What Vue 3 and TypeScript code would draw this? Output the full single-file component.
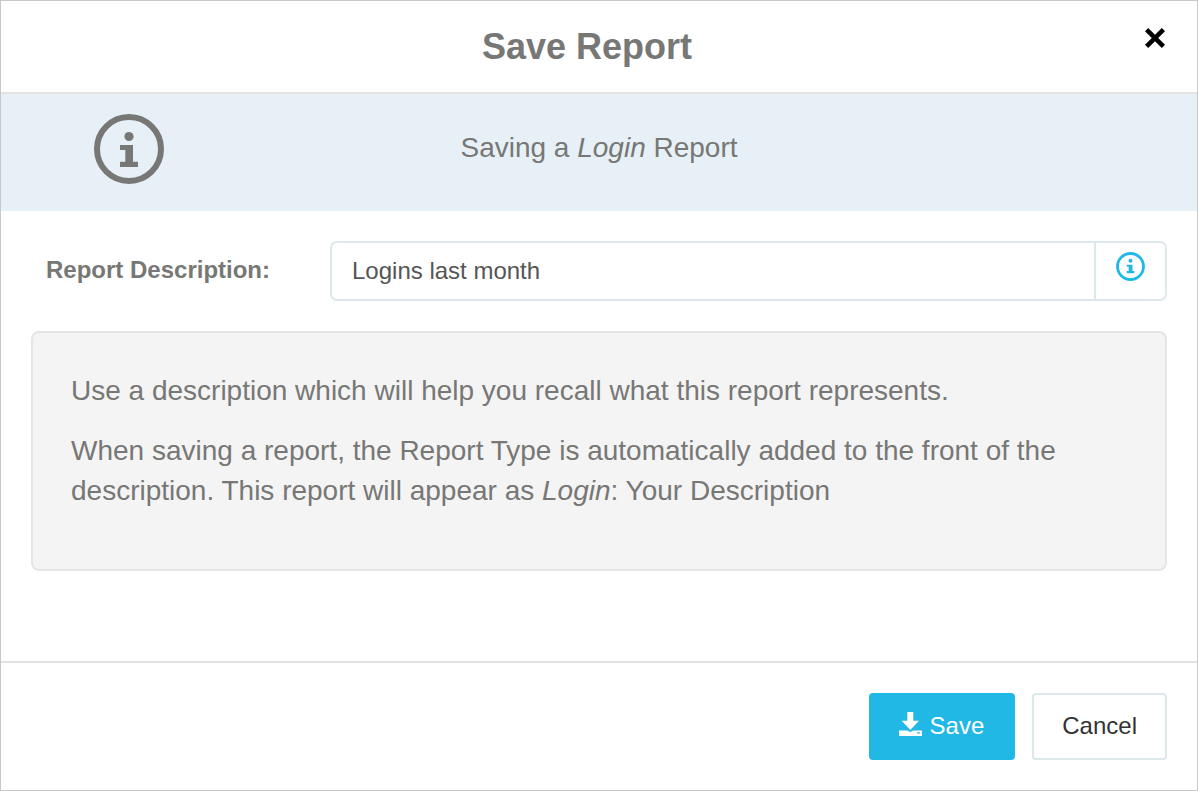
<script setup lang="ts">
const value = 'Logins last month'
</script>
<template>
  <div class="dialog">
    <header class="head">
      <h1>Save Report</h1>
      <svg class="close" viewBox="0 0 20 20" width="20" height="20"><path d="M3.2 0 L10 6.8 L16.8 0 L20 3.2 L13.2 10 L20 16.8 L16.8 20 L10 13.2 L3.2 20 L0 16.8 L6.8 10 L0 3.2 Z" fill="#000"/></svg>
    </header>
    <div class="banner">
      <div class="b-icon">
        <svg viewBox="0 0 70 70" width="70" height="70">
          <circle cx="35" cy="35" r="32" fill="none" stroke="#777775" stroke-width="6"/>
          <circle cx="35" cy="22.500" r="4.600" fill="#777775"/>
          <path d="M26 31h13v16.700h5V53H26v-5.300h5.300V36H26z" fill="#777775"/>
        </svg>
      </div>
      <p>Saving a <em>Login</em> Report</p>
    </div>
    <main class="body">
      <div class="row">
        <label>Report Description:</label>
        <div class="group">
          <input :value="value" />
          <span class="addon">
            <svg viewBox="0 0 29 29" width="29" height="29">
              <circle cx="14.500" cy="14.500" r="13" fill="none" stroke="#22b8e6" stroke-width="2.800"/>
              <circle cx="14.500" cy="8.800" r="2" fill="#22b8e6"/>
              <path d="M10.700 12.700h5.800V19h1.800v2.200h-7.600V19h2v-4.300h-2z" fill="#22b8e6"/>
            </svg>
          </span>
        </div>
      </div>
      <div class="well">
        <p>Use a description which will help you recall what this report represents.</p>
        <p>When saving a report, the Report Type is automatically added to the front of the description. This report will appear as <em>Login</em>: Your Description</p>
      </div>
    </main>
    <footer class="foot">
      <button class="btn primary">
        <svg viewBox="0 0 23 24" width="23" height="24"><path d="M8.300 0h6v8.700H20L11.300 18 2.700 8.700h5.600z M0 18.500h8l3.300 1.500 3.300-1.500H23V24H0z" fill="#fff"/><rect x="18" y="20.300" width="3" height="1.200" fill="#22b8e6"/></svg>
        <span>Save</span>
      </button>
      <button class="btn"><span>Cancel</span></button>
    </footer>
  </div>
</template>
<style>
html, body { margin: 0; background: #fff; }
</style>
<style scoped>
.dialog { box-sizing: border-box; width: 1198px; height: 791px; border: 1px solid #c9c9c9; display: flex; flex-direction: column; font-family: "Liberation Sans", Arial, sans-serif; color: #777775; background: #fff; overflow: hidden; }
.head { height: 91px; flex: none; border-bottom: 2px solid #e2e2e2; position: relative; display: flex; align-items: center; justify-content: center; padding-right: 24px; box-sizing: content-box; }
h1 { margin: 0; font-size: 36px; font-weight: 700; color: #777775; line-height: 1; }
.close { position: absolute; right: 32px; top: 27px; }
.banner { height: 117px; flex: none; background: #e8f0f7; display: grid; grid-template-columns: 256px 1fr 256px; }
.b-icon { display: flex; justify-content: center; align-items: flex-start; padding-top: 20px; }
.banner p { margin: 0; font-size: 28px; text-align: center; padding-top: 36px; line-height: 36px; }
.body { flex: 1; padding: 30px 30px 0; }
.row { display: flex; align-items: flex-start; height: 60px; }
label { width: 299px; padding-left: 15px; box-sizing: border-box; font-size: 24px; font-weight: 700; line-height: 58px; }
.group { flex: 1; display: flex; height: 60px; box-sizing: border-box; border: 2px solid #dde8eb; border-radius: 7px; }
input { flex: 1; min-width: 0; border: 0; outline: 0; padding: 0 20px; font: 24px "Liberation Sans", Arial, sans-serif; color: #555; background: transparent; }
.addon { width: 71px; flex: none; border-left: 2px solid #dde8eb; display: flex; justify-content: center; align-items: flex-start; padding-top: 9px; box-sizing: border-box; }
.well { margin-top: 30px; height: 240px; box-sizing: border-box; background: #f4f4f4; border: 2px solid #e4e6e6; border-radius: 8px; padding: 38px 38px 0; font-size: 28px; line-height: 40px; }
.well p { margin: 0 0 20px; }
.foot { height: 129px; flex: none; border-top: 2px solid #e2e2e2; box-sizing: border-box; display: flex; justify-content: flex-end; gap: 17px; padding: 30px 30px 0; }
.btn { height: 67px; box-sizing: border-box; border: 2px solid #dde8eb; border-radius: 4px; background: #fff; color: #333; font: 24px "Liberation Sans", Arial, sans-serif; padding: 0 28px; display: flex; align-items: center; gap: 8px; }
.btn span { position: relative; top: -1px; }
.primary { background: #22b8e6; border-color: #22b8e6; color: #fff; padding: 0 29px 0 28px; }
.primary svg { margin-bottom: 5px; }
</style>
